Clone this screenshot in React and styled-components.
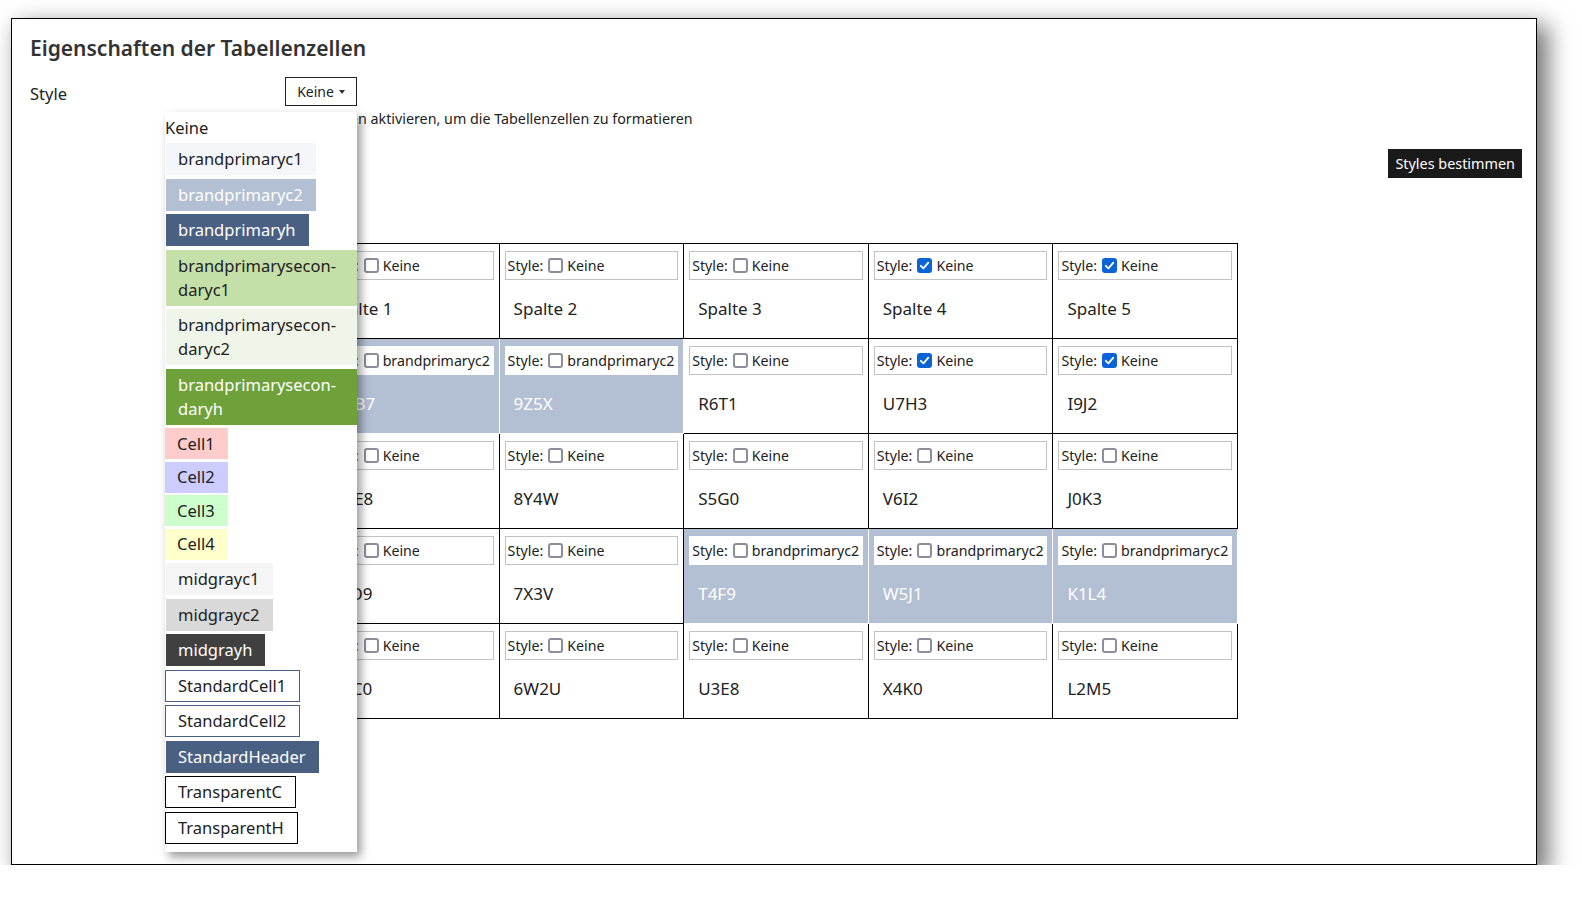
import React from 'react';
import styled, { createGlobalStyle } from 'styled-components';

const GlobalStyle = createGlobalStyle`
  body {
    margin: 0;
    background: #fff;
    font-family: "Noto Sans", "Open Sans", sans-serif;
    color: #222;
  }
`

// Dialog frame
const Dialog = styled.div`
  box-sizing: border-box;
  width: 1526px;
  height: 847px;
  margin: 18px 0 0 11px;
  padding: 15px 14px 0 18px;
  border: 1px solid #000;
  background: #fff;
  box-shadow: 9px 9px 22px 2px rgba(0,0,0,0.55);
`
const Title = styled.h2`
  margin: 0;
  font-size: 21px;
  font-weight: 600;
  line-height: 28px;
  color: #333;
`

// Style field
const FieldRow = styled.div`
  display: flex;
  align-items: flex-start;
  margin-top: 15px;
`
const FieldLabel = styled.div`
  width: 255px;
  padding-top: 6px;
  font-size: 16.5px;
  line-height: 22px;
`
const SelectWrap = styled.div`
  position: relative;
`
const SelectButton = styled.button`
  box-sizing: border-box;
  width: 72px;
  height: 29px;
  display: flex;
  align-items: center;
  justify-content: center;
  gap: 5px;
  padding: 0;
  border: 1px solid #222;
  background: #fff;
  font-family: inherit;
  font-size: 14px;
  color: #222;
`
const Caret = styled.span`
  width: 0;
  height: 0;
  border-left: 3.5px solid transparent;
  border-right: 3.5px solid transparent;
  border-top: 4px solid #333;
`
const Menu = styled.div`
  position: absolute;
  top: calc(100% + 6px);
  right: 0;
  width: 192px;
  z-index: 10;
  display: flex;
  flex-direction: column;
  align-items: flex-start;
  padding: 5px 0 8px;
  background: #fff;
  box-shadow: 4px 5px 9px rgba(0,0,0,0.4);
`
const MenuHead = styled.div`
  font-size: 16.5px;
  line-height: 22px;
`
const MenuItem = styled.div`
  box-sizing: border-box;
  max-width: calc(100% - ${p => (p.$inset ? 1 : 0)}px);
  margin-top: ${p => p.$gap}px;
  margin-left: ${p => (p.$inset ? 1 : 0)}px;
  padding: ${p => (p.$border ? 3 : p.$compact ? 3.5 : 4)}px 13px ${p => (p.$border ? 3 : p.$compact ? 3.5 : 4)}px 12px;
  border: ${p => (p.$border ? `1px solid ${p.$border}` : 'none')};
  background: ${p => p.$bg};
  color: ${p => p.$fg};
  font-size: 16.5px;
  line-height: 24px;
`
const Hint = styled.p`
  margin: 3px 0 0 255px;
  font-size: 14.3px;
  line-height: 20px;
`

// Action
const ActionRow = styled.div`
  display: flex;
  justify-content: flex-end;
  margin-top: 20px;
`
const ActionButton = styled.button`
  height: 29px;
  padding: 0 7px;
  border: none;
  background: #1a1a1a;
  color: #fff;
  font-family: inherit;
  font-size: 14.4px;
`

// Table
const Table = styled.table`
  width: 924px;
  margin: 65px auto 0;
  table-layout: fixed;
  border-collapse: separate;
  border-spacing: 0;
  border-top: 1px solid #000;
  border-left: 1px solid #000;
`
const Cell = styled.td`
  padding: 7px 5px 5px;
  vertical-align: top;
  border-right: 1px solid ${p => (p.$hl ? '#fff' : '#000')};
  border-bottom: 1px solid ${p => (p.$hl ? '#fff' : '#000')};
  background: ${p => (p.$hl ? '#b3bfd3' : '#fff')};
  color: ${p => (p.$hl ? '#fff' : '#222')};
`
const StyleBox = styled.div`
  box-sizing: border-box;
  height: 29px;
  display: flex;
  align-items: center;
  padding-left: 2px;
  border: 1px solid ${p => (p.$hl ? '#fff' : '#c3c3c3')};
  background: #fff;
  color: #222;
  font-size: 14.2px;
  white-space: nowrap;
  overflow: hidden;
`
const Check = styled.span`
  box-sizing: border-box;
  width: 15px;
  height: 15px;
  margin: 0 4px 0 5px;
  border-radius: 3px;
  border: ${p => (p.$on ? 'none' : '2px solid #8d8d9b')};
  background: ${p => (p.$on ? '#0b63d6' : '#fff')};
  display: flex;
  align-items: center;
  justify-content: center;
`
const CellValue = styled.div`
  padding: 18px 9px 13px;
  font-size: 17px;
  line-height: 22px;
`

const menuItems = [
  { label: 'brandprimaryc1', bg: '#f5f6fa', fg: '#222', gap: 4, inset: true },
  { label: 'brandprimaryc2', bg: '#b3bfd3', fg: '#fff', gap: 3.5, inset: true },
  { label: 'brandprimaryh', bg: '#4a6083', fg: '#fff', gap: 3.5, inset: true },
  { label: 'brandprimarysecon\u00ADdaryc1', bg: '#c5dfa9', fg: '#222', gap: 3.5, inset: true },
  { label: 'brandprimarysecon\u00ADdaryc2', bg: '#f0f5ea', fg: '#222', gap: 3.5, inset: true },
  { label: 'brandprimarysecon\u00ADdaryh', bg: '#6fa13b', fg: '#fff', gap: 3.5, inset: true },
  { label: 'Cell1', bg: '#ffcccc', fg: '#222', gap: 3.5, compact: true },
  { label: 'Cell2', bg: '#ccccff', fg: '#222', gap: 2.5, compact: true },
  { label: 'Cell3', bg: '#ccffcc', fg: '#222', gap: 2.5, compact: true },
  { label: 'Cell4', bg: '#ffffcc', fg: '#222', gap: 2.5, compact: true },
  { label: 'midgrayc1', bg: '#f5f5f5', fg: '#222', gap: 3.5, inset: true },
  { label: 'midgrayc2', bg: '#d9d9d9', fg: '#222', gap: 3.5, inset: true },
  { label: 'midgrayh', bg: '#404040', fg: '#fff', gap: 3.5, inset: true },
  { label: 'StandardCell1', bg: '#fff', fg: '#222', gap: 3.5, border: '#4a6083' },
  { label: 'StandardCell2', bg: '#fff', fg: '#222', gap: 3.5, border: '#4a6083' },
  { label: 'StandardHeader', bg: '#4a6083', fg: '#fff', gap: 3.5, inset: true },
  { label: 'TransparentC', bg: '#fff', fg: '#222', gap: 3.5, border: '#000' },
  { label: 'TransparentH', bg: '#fff', fg: '#222', gap: 3.5, border: '#000' },
];

// [value, style label, checked, highlighted]
const rows = [
  [['Spalte 1', 'Keine'], ['Spalte 2', 'Keine'], ['Spalte 3', 'Keine'], ['Spalte 4', 'Keine', true], ['Spalte 5', 'Keine', true]],
  [['W8B7', 'brandprimaryc2', false, true], ['9Z5X', 'brandprimaryc2', false, true], ['R6T1', 'Keine'], ['U7H3', 'Keine', true], ['I9J2', 'Keine', true]],
  [['M9E8', 'Keine'], ['8Y4W', 'Keine'], ['S5G0', 'Keine'], ['V6I2', 'Keine'], ['J0K3', 'Keine']],
  [['A1O9', 'Keine'], ['7X3V', 'Keine'], ['T4F9', 'brandprimaryc2', false, true], ['W5J1', 'brandprimaryc2', false, true], ['K1L4', 'brandprimaryc2', false, true]],
  [['N1C0', 'Keine'], ['6W2U', 'Keine'], ['U3E8', 'Keine'], ['X4K0', 'Keine'], ['L2M5', 'Keine']],
];

const CheckBox = ({ on }) => (
  <Check $on={on}>
    {on && (
      <svg width="11" height="11" viewBox="0 0 11 11">
        <polyline points="1.8,5.8 4.4,8.3 9.3,2.6" fill="none" stroke="#fff" strokeWidth="1.8" strokeLinecap="round" strokeLinejoin="round" />
      </svg>
    )}
  </Check>
);

const StyleMenu = () => (
  <Menu>
    <MenuHead>Keine</MenuHead>
    {menuItems.map(item => (
      <MenuItem
        key={item.label}
        $bg={item.bg}
        $fg={item.fg}
        $gap={item.gap}
        $inset={item.inset}
        $compact={item.compact}
        $border={item.border}
      >
        {item.label}
      </MenuItem>
    ))}
  </Menu>
);

const App = () => {
  return (
    <>
      <GlobalStyle />
      <Dialog>
        <Title>Eigenschaften der Tabellenzellen</Title>
        <FieldRow>
          <FieldLabel>Style</FieldLabel>
          <SelectWrap>
            <SelectButton>Keine <Caret /></SelectButton>
            <StyleMenu />
          </SelectWrap>
        </FieldRow>
        <Hint>Checkboxen aktivieren, um die Tabellenzellen zu formatieren</Hint>
        <ActionRow>
          <ActionButton>Styles bestimmen</ActionButton>
        </ActionRow>
        <Table>
          <tbody>
            {rows.map((row, r) => (
              <tr key={r}>
                {row.map(([value, style, on, hl], c) => (
                  <Cell key={c} $hl={hl}>
                    <StyleBox $hl={hl}>
                      Style:<CheckBox on={on} />{style}
                    </StyleBox>
                    <CellValue>{value}</CellValue>
                  </Cell>
                ))}
              </tr>
            ))}
          </tbody>
        </Table>
      </Dialog>
    </>
  );
};

export default App;
